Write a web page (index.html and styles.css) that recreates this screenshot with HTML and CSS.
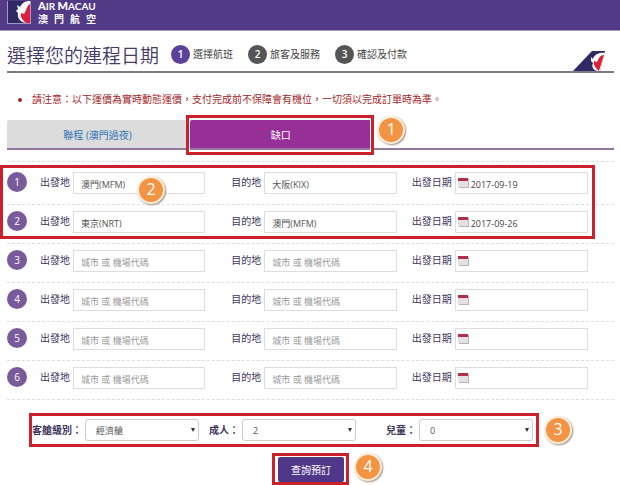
FILE: index.html
```
<!DOCTYPE html>
<html lang="zh-Hant">
<head>
    <meta charset="UTF-8">
    <title>澳門航空 - 選擇您的運程日期</title>
    <link rel="stylesheet" href="styles.css">
</head>
<body>
    <div class="header">
        <a href="#" class="logo">
            <svg width="24" height="23" viewBox="0 0 24 23">
                <rect width="24" height="23" fill="#a597c4"/>
                <rect x="1" width="22" height="22" fill="#2f2a66"/>
                <path d="M23 0 C18 0 15 2 13 6 L10 4 L11 8 L9 10 L11 12 C10 17 13 21 19 22 H23 Z" fill="#fff"/>
                <path d="M23 3 V22 H19 C15 19 13 15 14 12 L17 13 L19 9 C20 6 21 4 23 3 Z" fill="#dc1f3c"/>
            </svg>
            <span class="brand">
                <span class="brand-en"><b>A</b>IR <b>M</b>ACAU</span>
                <span class="brand-zh"><span>澳</span><span>門</span><span>航</span><span>空</span></span>
            </span>
        </a>
    </div>

    <div class="content">
        <div class="titlebar">
            <h1>選擇您的連程日期</h1>
            <ol class="steps">
                <li class="active"><b>1</b>選擇航班</li>
                <li><b>2</b>旅客及服務</li>
                <li><b>3</b>確認及付款</li>
            </ol>
            <svg class="tail" width="32" height="20" viewBox="0 0 32 20">
                <path d="M0 20 L19 0 H32 L27 20 Z" fill="#2f2a66"/>
                <path d="M32 2 C26 1 21 4 20 8 L18 6 L18 10 L20 12 C18 16 21 20 25 20 H27 L31 5 Z" fill="#fff"/>
                <path d="M31 4 L26 20 C22 17 20 13 21 10 L24 11 L26 7 C27 5 29 4 31 4 Z" fill="#dc1f35"/>
            </svg>
        </div>

        <ul class="notice">
            <li>請注意：以下運價為實時動態運價，支付完成前不保障會有機位，一切須以完成訂單時為準。</li>
        </ul>

        <div class="tabs">
            <button type="button" class="tab">聯程 (澳門過夜)</button>
            <div class="tab-mark">
                <button type="button" class="tab tab-on">缺口</button>
                <span class="frame frame-tab"></span>
                <span class="badge badge-tab">1</span>
            </div>
        </div>

        <form action="#">
            <!-- legs that are filled in -->
            <div class="legs marked">
                <div class="leg">
                    <span class="num">1</span>
                    <div class="field"><label for="from1">出發地</label><input type="text" id="from1" value="澳門(MFM)"></div>
                    <div class="field to"><label for="to1">目的地</label><input type="text" id="to1" value="大阪(KIX)"></div>
                    <div class="field date"><label for="date1">出發日期</label><span class="datebox"><svg class="cal" width="11" height="10" viewBox="0 0 11 10"><rect x="1" y="1" width="10" height="9" fill="#b9b4b8"/><rect width="10" height="9" fill="#e6dfe3"/><rect width="10" height="3" fill="#b0304c"/></svg><input type="text" id="date1" value="2017-09-19"></span></div>
                </div>
                <div class="leg">
                    <span class="num">2</span>
                    <div class="field"><label for="from2">出發地</label><input type="text" id="from2" value="東京(NRT)"></div>
                    <div class="field to"><label for="to2">目的地</label><input type="text" id="to2" value="澳門(MFM)"></div>
                    <div class="field date"><label for="date2">出發日期</label><span class="datebox"><svg class="cal" width="11" height="10" viewBox="0 0 11 10"><rect x="1" y="1" width="10" height="9" fill="#b9b4b8"/><rect width="10" height="9" fill="#e6dfe3"/><rect width="10" height="3" fill="#b0304c"/></svg><input type="text" id="date2" value="2017-09-26"></span></div>
                </div>
                <span class="frame frame-legs"></span>
                <span class="badge badge-legs">2</span>
            </div>

            <!-- empty legs -->
            <div class="legs">
                <div class="leg">
                    <span class="num">3</span>
                    <div class="field"><label for="from3">出發地</label><input type="text" id="from3" placeholder="城市 或 機場代碼"></div>
                    <div class="field to"><label for="to3">目的地</label><input type="text" id="to3" placeholder="城市 或 機場代碼"></div>
                    <div class="field date"><label for="date3">出發日期</label><span class="datebox"><svg class="cal" width="11" height="10" viewBox="0 0 11 10"><rect x="1" y="1" width="10" height="9" fill="#b9b4b8"/><rect width="10" height="9" fill="#e6dfe3"/><rect width="10" height="3" fill="#b0304c"/></svg><input type="text" id="date3"></span></div>
                </div>
                <div class="leg">
                    <span class="num">4</span>
                    <div class="field"><label for="from4">出發地</label><input type="text" id="from4" placeholder="城市 或 機場代碼"></div>
                    <div class="field to"><label for="to4">目的地</label><input type="text" id="to4" placeholder="城市 或 機場代碼"></div>
                    <div class="field date"><label for="date4">出發日期</label><span class="datebox"><svg class="cal" width="11" height="10" viewBox="0 0 11 10"><rect x="1" y="1" width="10" height="9" fill="#b9b4b8"/><rect width="10" height="9" fill="#e6dfe3"/><rect width="10" height="3" fill="#b0304c"/></svg><input type="text" id="date4"></span></div>
                </div>
                <div class="leg">
                    <span class="num">5</span>
                    <div class="field"><label for="from5">出發地</label><input type="text" id="from5" placeholder="城市 或 機場代碼"></div>
                    <div class="field to"><label for="to5">目的地</label><input type="text" id="to5" placeholder="城市 或 機場代碼"></div>
                    <div class="field date"><label for="date5">出發日期</label><span class="datebox"><svg class="cal" width="11" height="10" viewBox="0 0 11 10"><rect x="1" y="1" width="10" height="9" fill="#b9b4b8"/><rect width="10" height="9" fill="#e6dfe3"/><rect width="10" height="3" fill="#b0304c"/></svg><input type="text" id="date5"></span></div>
                </div>
                <div class="leg last">
                    <span class="num">6</span>
                    <div class="field"><label for="from6">出發地</label><input type="text" id="from6" placeholder="城市 或 機場代碼"></div>
                    <div class="field to"><label for="to6">目的地</label><input type="text" id="to6" placeholder="城市 或 機場代碼"></div>
                    <div class="field date"><label for="date6">出發日期</label><span class="datebox"><svg class="cal" width="11" height="10" viewBox="0 0 11 10"><rect x="1" y="1" width="10" height="9" fill="#b9b4b8"/><rect width="10" height="9" fill="#e6dfe3"/><rect width="10" height="3" fill="#b0304c"/></svg><input type="text" id="date6"></span></div>
                </div>
            </div>

            <div class="options">
                <div class="option">
                    <label for="cabin">客艙級別：</label>
                    <span class="pick"><select id="cabin"><option>經濟艙</option><option>商務艙</option></select></span>
                </div>
                <div class="option adult">
                    <label for="adult">成人：</label>
                    <span class="pick"><select id="adult"><option>1</option><option selected>2</option><option>3</option></select></span>
                </div>
                <div class="option child">
                    <label for="child">兒童：</label>
                    <span class="pick"><select id="child"><option>0</option><option>1</option><option>2</option></select></span>
                </div>
                <span class="badge badge-options">3</span>
            </div>

            <div class="submit">
                <div class="submit-mark">
                    <button type="submit">查詢預訂</button>
                    <span class="badge badge-submit">4</span>
                </div>
            </div>
        </form>
    </div>
</body>
</html>
```

FILE: styles.css
```
* {
    margin: 0;
    padding: 0;
    box-sizing: border-box;
}

body {
    background-color: #fff;
    color: #444;
    font-family: "Open Sans", "Noto Sans CJK TC", sans-serif;
    font-size: 10px;
    line-height: 14px;
}

input, select, button {
    font-family: inherit;
}

/* Header */
.header {
    background-color: #533a87;
    border-bottom: 1px solid #a597c4;
    height: 31px;
    padding: 1px 7px;
}

.logo {
    display: flex;
    gap: 7px;
    color: #fff;
    text-decoration: none;
}

.brand {
    display: flex;
    flex-direction: column;
    width: 58px;
}

.brand-en {
    font-family: Lato, sans-serif;
    font-size: 10px;
    font-weight: bold;
    line-height: 10px;
    white-space: nowrap;
}

.brand-en b {
    font-size: 11px;
}

.brand-zh {
    display: flex;
    justify-content: space-between;
    font-family: "Noto Sans CJK TC", sans-serif;
    font-size: 10px;
    font-weight: bold;
    line-height: 12px;
    margin-top: 2px;
}

.content {
    padding: 0 6px 0 7px;
}

/* Title and steps */
.titlebar {
    display: flex;
    align-items: center;
    height: 42px;
    border-bottom: 2px solid #7d7a82;
}

h1 {
    color: #453a68;
    font-size: 19px;
    font-weight: 350;
    line-height: 30px;
    margin-top: 9px;
}

.steps {
    display: flex;
    gap: 15px;
    list-style: none;
    margin: 6px 0 0 12px;
}

.steps li {
    display: flex;
    align-items: center;
    gap: 3px;
}

.steps b {
    width: 19px;
    height: 19px;
    border-radius: 50%;
    background-color: #555;
    color: #fff;
    font-weight: 600;
    line-height: 19px;
    text-align: center;
}

.steps .active b {
    background-color: #5b4298;
}

.tail {
    margin: 0 9px 0 auto;
    align-self: flex-end;
}

.notice {
    color: #a3262a;
    margin: 19px 0 14px 25px;
}

/* Tabs */
.tabs {
    display: flex;
    gap: 2px;
    border-bottom: 2px solid #94779f;
    padding-right: 40%;
}

.tab {
    width: 100%;
    height: 28px;
    border: none;
    border-radius: 2px 2px 0 0;
    background-color: #dcdcdc;
    color: #2e74b5;
    font-size: 10px;
}

.tabs > .tab {
    flex: 1;
}

.tab-mark {
    position: relative;
    flex: 1;
    height: 28px;
}

.tab-on {
    background-color: #963096;
    color: #fff;
}

/* Marks over the form */
.frame {
    position: absolute;
    border: 3px solid #cc202c;
    pointer-events: none;
}

.frame-tab {
    inset: -5px -3px -7px -4px;
    box-shadow: inset 0 0 0 1px #fff;
}

.frame-legs {
    inset: 4px 19px 4px -7px;
}

.badge {
    position: absolute;
    width: 28px;
    height: 28px;
    border: 2px solid #fdeedd;
    border-radius: 50%;
    background-color: #f39444;
    box-shadow: 1px 1px 2px #a08c78;
    color: #fff;
    font-size: 16px;
    line-height: 23px;
    text-align: center;
    pointer-events: none;
}

.badge-tab {
    top: -4px;
    right: -34px;
}

.badge-legs {
    top: 15px;
    left: 130px;
}

.badge-options {
    top: 0;
    right: -36px;
}

.badge-submit {
    top: -3px;
    right: -36px;
}

/* Legs */
.marked {
    position: relative;
    margin-top: 11px;
}

.leg {
    display: flex;
    border-top: 1px dashed #ddd;
    padding: 6px 26px 10px 0;
}

.marked .leg:first-child {
    padding-top: 10px;
}

.last {
    border-bottom: 1px dashed #ddd;
}

.num {
    width: 20px;
    height: 20px;
    margin-right: 13px;
    border-radius: 50%;
    background-color: #795b9b;
    color: #fff;
    line-height: 20px;
    text-align: center;
}

.field {
    display: flex;
    flex: 1 1 165px;
    min-width: 0;
    gap: 3px;
}

.to {
    margin-left: 26px;
}

.date {
    flex-basis: 176px;
    margin-left: 15px;
}

.field label {
    color: #3f3660;
    line-height: 20px;
    white-space: nowrap;
}

.field input {
    flex: 1;
    width: 100%;
    min-width: 0;
    height: 22px;
    border: 1px solid #ddd;
    padding: 2px 7px 0;
    color: #555;
    font-size: 9px;
}

.field input::placeholder {
    color: #999;
}

.datebox {
    display: flex;
    flex: 1;
    align-items: center;
    min-width: 0;
    height: 22px;
    border: 1px solid #ddd;
    padding-left: 2px;
}

.datebox input {
    height: 20px;
    border: none;
    padding: 2px 2px 0;
    color: #444;
}

.cal {
    flex: none;
}

/* Cabin and passengers */
.options {
    position: relative;
    display: flex;
    margin: 13px 75px 0 22px;
    border: 3px solid #cc202c;
    padding: 3px 3px 3px 0;
}

.option {
    display: flex;
    align-items: center;
    gap: 3px;
}

.adult {
    margin-left: 10px;
}

.child {
    margin-left: auto;
}

.option label {
    color: #3f3660;
    font-weight: bold;
}

.pick {
    position: relative;
}

.pick::after {
    content: "";
    position: absolute;
    top: 9px;
    right: 4px;
    border: 2px solid transparent;
    border-top: 4px solid #333;
    border-bottom: none;
    pointer-events: none;
}

.pick select {
    appearance: none;
    display: block;
    width: 114px;
    height: 22px;
    border: 1px solid #ccc;
    border-radius: 3px;
    padding: 0 10px;
    background-color: #fff;
    color: #555;
    font-size: 9px;
}

/* Submit */
.submit {
    display: flex;
    justify-content: center;
    margin-top: 6px;
}

.submit-mark {
    position: relative;
    border: 3px solid #cc202c;
    padding: 1px 2px 0 3px;
}

.submit button {
    display: block;
    width: 66px;
    height: 25px;
    border: none;
    border-radius: 2px;
    background-color: #503787;
    color: #fff;
    font-size: 10px;
}
```
